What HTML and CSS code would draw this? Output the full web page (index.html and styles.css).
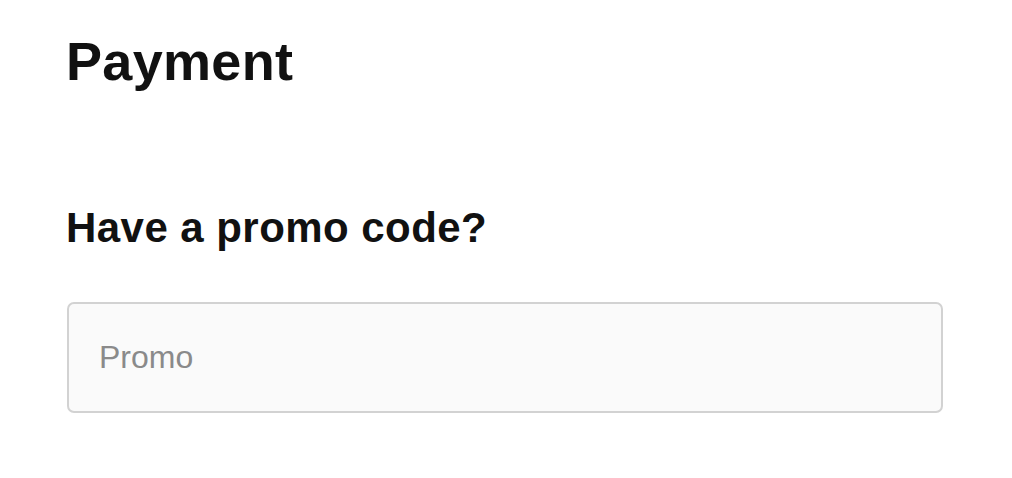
FILE: index.html
```html
<!DOCTYPE html>
<html lang="en">
<head>
    <meta charset="UTF-8">
    <meta name="viewport" content="width=device-width, initial-scale=1.0">
    <title>Payment</title>
    <link rel="stylesheet" href="styles.css">
</head>
<body>

<div class="payment">
    <h1>Payment</h1>

    <h2>Have a promo code?</h2>
    <input type="text" class="promo-input" placeholder="Promo">
</div>

</body>
</html>
```

FILE: styles.css
```css
body {
    font-family: "Liberation Sans", Arial, sans-serif;
    margin: 0;
    padding: 0;
    background: #ffffff;
    color: #111111;
}

.payment {
    padding: 29px 66px 0 67px;
}

h1 {
    margin: 0 0 0 -1px;
    font-size: 54px;
    line-height: 64px;
    font-weight: bold;
    letter-spacing: 0.3px;
}

h2 {
    margin: 110px 0 0 -1px;
    font-size: 42px;
    line-height: 50px;
    font-weight: bold;
    letter-spacing: 0.45px;
}

.promo-input {
    display: block;
    box-sizing: border-box;
    width: 876px;
    height: 111px;
    margin-top: 49px;
    padding: 0 30px;
    border: 2px solid #d2d2d2;
    border-radius: 7px;
    background-color: #fafafa;
    font-family: "Liberation Sans", Arial, sans-serif;
    font-size: 32px;
    color: #333;
    outline: none;
}

.promo-input::placeholder {
    color: #8a8a8a;
}
```
